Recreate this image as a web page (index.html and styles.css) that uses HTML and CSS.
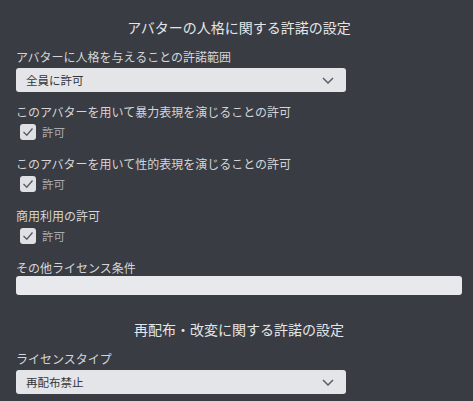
FILE: index.html
```html
<!DOCTYPE html>
<html lang="ja">
<head>
<meta charset="utf-8">
<link rel="stylesheet" href="styles.css">
</head>
<body>
<div class="panel">
  <h2 class="section-title first">アバターの人格に関する許諾の設定</h2>

  <div class="field">
    <div class="label">アバターに人格を与えることの許諾範囲</div>
    <div class="select">
      <span>全員に許可</span>
      <svg class="chev" width="12" height="7" viewBox="0 0 12 7"><polyline points="1,1 6,6 11,1" fill="none" stroke="#5c5f66" stroke-width="1.5"/></svg>
    </div>
  </div>

  <div class="field">
    <div class="label">このアバターを用いて暴力表現を演じることの許可</div>
    <div class="check-row">
      <span class="box"><svg width="16" height="16" viewBox="0 0 16 16"><polyline points="3.5,8 6.8,11.2 12.5,4.5" fill="none" stroke="#5a5d63" stroke-width="1.4"/></svg></span>
      <span class="check-text">許可</span>
    </div>
  </div>

  <div class="field gap-after-check">
    <div class="label">このアバターを用いて性的表現を演じることの許可</div>
    <div class="check-row">
      <span class="box"><svg width="16" height="16" viewBox="0 0 16 16"><polyline points="3.5,8 6.8,11.2 12.5,4.5" fill="none" stroke="#5a5d63" stroke-width="1.4"/></svg></span>
      <span class="check-text">許可</span>
    </div>
  </div>

  <div class="field gap-after-check">
    <div class="label">商用利用の許可</div>
    <div class="check-row">
      <span class="box"><svg width="16" height="16" viewBox="0 0 16 16"><polyline points="3.5,8 6.8,11.2 12.5,4.5" fill="none" stroke="#5a5d63" stroke-width="1.4"/></svg></span>
      <span class="check-text">許可</span>
    </div>
  </div>

  <div class="field gap-after-check">
    <div class="label">その他ライセンス条件</div>
    <div class="text-input"></div>
  </div>

  <h2 class="section-title second">再配布・改変に関する許諾の設定</h2>

  <div class="field">
    <div class="label">ライセンスタイプ</div>
    <div class="select">
      <span>再配布禁止</span>
      <svg class="chev" width="12" height="7" viewBox="0 0 12 7"><polyline points="1,1 6,6 11,1" fill="none" stroke="#5c5f66" stroke-width="1.5"/></svg>
    </div>
  </div>
</div>
</body>
</html>
```

FILE: styles.css
```css
* { box-sizing: border-box; }
html, body {
  margin: 0;
  background: #393c43;
  height: 100%;
  overflow: hidden;
}
body {
  font-family: "Noto Sans CJK JP", "Noto Sans", sans-serif;
  color: #d6d7d9;
}
.panel {
  padding: 0 11px 0 16px;
}
.section-title {
  margin: 0;
  font-size: 14px;
  line-height: 20px;
  font-weight: normal;
  text-align: center;
  color: #e4e5e7;
}
.section-title.first { padding-top: 17px; }
.section-title.second { margin-top: 24px; }
.field { margin-top: 12px; }
.field.gap-after-check { margin-top: 15px; }
.label {
  font-size: 12px;
  line-height: 16px;
  color: #d4d5d8;
}
.select {
  margin-top: 3px;
  width: 330px;
  height: 24px;
  background: #e3e5e9;
  border-radius: 3px;
  display: flex;
  align-items: center;
  justify-content: space-between;
  padding: 0 12px 0 10px;
  font-size: 11.5px;
  color: #34363a;
}
.chev { display: block; }
.check-row {
  margin-top: 3px;
  display: flex;
  align-items: center;
  gap: 6px;
  padding-left: 4px;
  height: 18px;
}
.box {
  width: 16px;
  height: 16px;
  background: #dfe0e3;
  border-radius: 3px;
  display: block;
}
.box svg { display: block; }
.check-text {
  font-size: 11.5px;
  color: #a9abb0;
}
.text-input {
  margin-top: 0;
  height: 19px;
  background: #e7e9ed;
  border-radius: 3px;
}
```
